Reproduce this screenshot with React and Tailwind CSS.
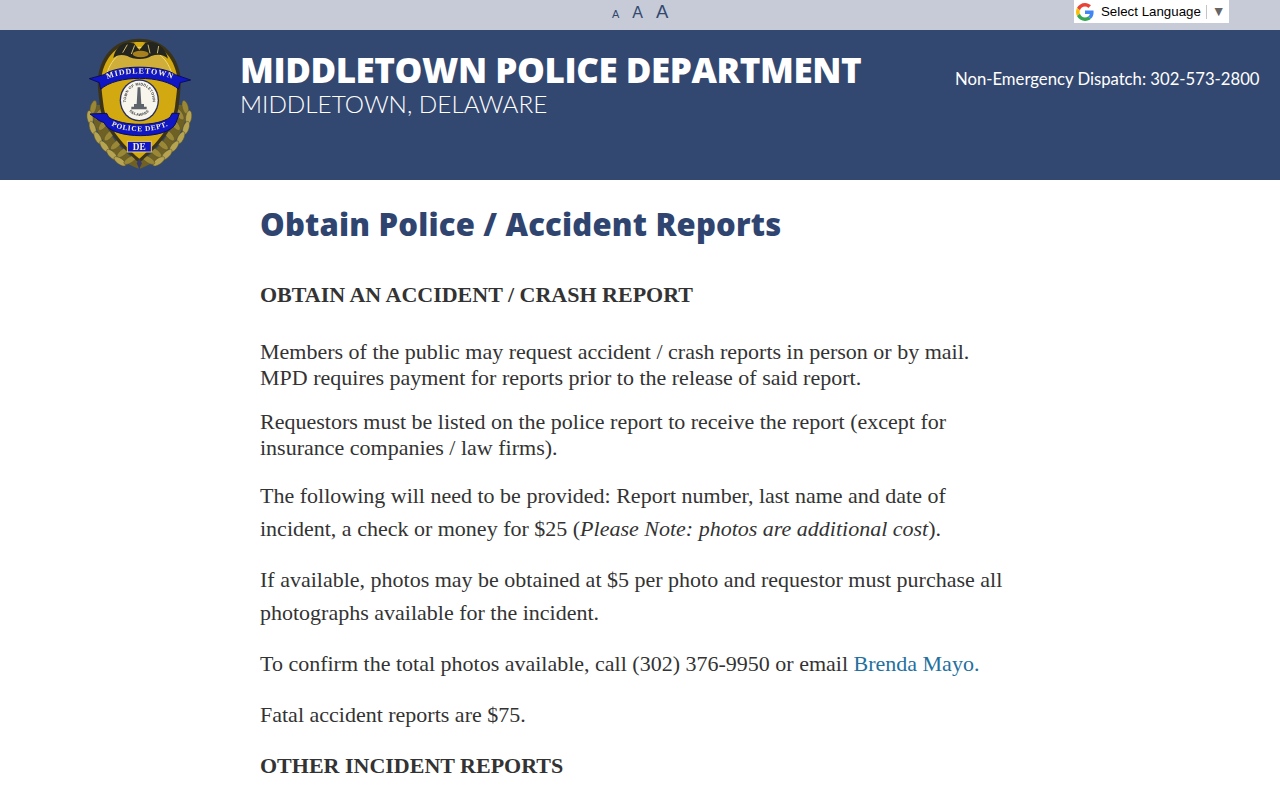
import React from 'react';

// leaf positions on the left laurel, mirrored for the right one
const LEAVES = [
  [70, 232, 15], [60, 262, -8], [88, 252, 35], [68, 294, -18], [100, 284, 38], [84, 324, -28],
  [118, 316, 42], [104, 350, -38], [138, 344, 48], [126, 374, -45], [158, 368, 52], [150, 394, -55], [180, 390, 58],
];

function Laurel() {
  return (
    <g>
      <path d="M62 225 C66 310 130 390 206 416 L206 396 C150 360 100 300 92 225 Z" fill="#6f6124" />
      {LEAVES.map(([x, y, r], i) => (
        <ellipse key={i} cx={x} cy={y} rx="9" ry="21" transform={`rotate(${r} ${x} ${y})`} fill={i % 2 ? '#b7a450' : '#9a8836'} stroke="#55502f" strokeWidth="1.5" />
      ))}
    </g>
  );
}

function Badge() {
  return (
    <svg width="140" height="150" viewBox="0 0 420 450" className="block blur-[0.3px]">
      <Laurel />
      <g transform="translate(416 0) scale(-1 1)">
        <Laurel />
      </g>
      {/* shield */}
      <path d="M208 26 C150 26 100 60 86 130 C80 160 86 190 90 230 C98 290 150 350 208 398 C266 350 318 290 326 230 C330 190 336 160 330 130 C316 60 266 26 208 26 Z" fill="#3b3318" />
      <path d="M208 36 C156 36 110 68 96 132 C91 165 97 195 101 230 C109 286 156 342 208 386 C260 342 307 286 315 230 C319 195 325 165 320 132 C306 68 260 36 208 36 Z" fill="#d2a911" />
      <path d="M208 52 C166 52 126 78 110 132 L306 132 C290 78 250 52 208 52 Z" fill="#cfae3a" stroke="#f0dc80" strokeWidth="3" />
      {/* eagle */}
      <path d="M130 84 C134 58 154 30 192 40 L208 60 L226 38 C260 28 288 56 294 86 C280 72 262 72 244 78 C228 90 190 90 172 78 C156 72 142 74 130 84 Z" fill="#25251f" />
      <path d="M158 68 L172 44 M184 72 L194 46 M240 70 L234 44 M262 70 L266 48" stroke="#cdbb6a" strokeWidth="3" />
      <ellipse cx="212" cy="72" rx="24" ry="10" fill="#a9811c" />
      {/* top ribbon */}
      <path d="M58 146 L102 134 C140 104 276 104 316 134 L362 150 L330 158 L326 178 C280 134 138 134 92 178 L88 158 Z" fill="#1016c4" stroke="#0b0e5e" strokeWidth="3" />
      <path id="topArc" d="M108 150 C150 124 268 124 312 150" fill="none" />
      <text fontFamily="Liberation Serif, serif" fontSize="24" fontWeight="700" fill="#f3eed0" letterSpacing="2.5">
        <textPath href="#topArc" startOffset="50%" textAnchor="middle">MIDDLETOWN</textPath>
      </text>
      {/* seal */}
      <ellipse cx="208" cy="211" rx="59" ry="63" fill="#2b2e5c" />
      <ellipse cx="208" cy="211" rx="55" ry="59" fill="#f7f5ec" />
      <path id="sealTop" d="M168 214 C168 150 248 150 248 214" fill="none" />
      <path id="sealLow" d="M170 232 C186 266 230 266 246 232" fill="none" />
      <text fontFamily="Liberation Sans, sans-serif" fontSize="11" fontWeight="700" fill="#33333a" letterSpacing="0.8">
        <textPath href="#sealTop" startOffset="50%" textAnchor="middle">TOWN OF MIDDLETOWN</textPath>
      </text>
      <text fontFamily="Liberation Sans, sans-serif" fontSize="11" fontWeight="700" fill="#33333a" letterSpacing="0.8">
        <textPath href="#sealLow" startOffset="50%" textAnchor="middle">DELAWARE</textPath>
      </text>
      <path d="M203 172 h8 l3 50 h8 v8 h8 v8 h-46 v-8 h8 v-8 h8 Z" fill="#5d626b" />
      {/* lower ribbon */}
      <path d="M60 252 L110 250 L116 262 C160 290 262 290 300 262 L306 250 L328 250 L318 278 C300 330 124 330 102 278 L88 272 Z" fill="#1016c4" stroke="#0b0e5e" strokeWidth="3" />
      <path id="lowArc" d="M120 284 C160 310 258 310 300 284" fill="none" />
      <text fontFamily="Liberation Serif, serif" fontSize="22" fontWeight="700" fill="#f3eed0" letterSpacing="2">
        <textPath href="#lowArc" startOffset="50%" textAnchor="middle">POLICE DEPT.</textPath>
      </text>
      {/* state tag */}
      <rect x="172" y="334" width="72" height="32" fill="#1016c4" stroke="#e2cb62" strokeWidth="3" />
      <text x="208" y="360" textAnchor="middle" fontFamily="Liberation Serif, serif" fontSize="28" fontWeight="700" fill="#f3eed0">DE</text>
      <path d="M208 386 l8 14 l-8 16 l-8 -16 Z" fill="#37396a" />
    </svg>
  );
}

function GoogleG() {
  return (
    <svg width="18" height="18" viewBox="0 0 48 48">
      <path fill="#EA4335" d="M24 9.5c3.5 0 6.6 1.2 9.1 3.6l6.8-6.8C35.8 2.5 30.4 0 24 0 14.6 0 6.5 5.4 2.6 13.2l7.9 6.2C12.4 13.6 17.7 9.5 24 9.5z" />
      <path fill="#4285F4" d="M46.9 24.5c0-1.6-.1-3.1-.4-4.5H24v9h12.9c-.6 3-2.2 5.500-4.800 7.200l7.700 6c4.500-4.200 7.100-10.300 7.100-17.700z" />
      <path fill="#FBBC05" d="M10.500 28.600c-.5-1.400-.8-3-.8-4.600s.3-3.200.8-4.600l-7.900-6.200C.9 16.500 0 20.100 0 24s.9 7.500 2.600 10.800l7.900-6.200z" />
      <path fill="#34A853" d="M24 48c6.500 0 11.900-2.100 15.800-5.800l-7.700-6c-2.100 1.400-4.900 2.300-8.100 2.300-6.300 0-11.600-4.100-13.500-9.900l-7.900 6.200C6.500 42.600 14.600 48 24 48z" />
    </svg>
  );
}

export default function App() {
  return (
    <div className="h-[800px] overflow-hidden bg-white font-['Liberation_Serif',serif] text-[#333333]">
      {/* top utility bar */}
      <div className="h-[30px] bg-[#c6cbd7] flex items-start font-['Liberation_Sans',sans-serif]">
        <div className="ml-[612px] w-[462px] h-[24px] flex items-baseline text-[#33486f]">
          <span className="text-[11px] leading-[26px]">A</span>
          <span className="ml-[13px] text-[16px] leading-[26px]">A</span>
          <span className="ml-[13px] text-[18.500px] leading-[24px]">A</span>
        </div>
        <div className="w-[155px] h-[23px] bg-white flex items-center pl-[2px] text-[13.300px] text-black">
          <GoogleG />
          <span className="ml-[7px]">Select Language</span>
          <span className="ml-[5px] h-[14px] border-l border-[#c4c4c4]" />
          <span className="ml-[5px] text-[#666666] text-[14px]">▼</span>
        </div>
      </div>

      {/* header */}
      <div className="h-[150px] bg-[#334870] flex items-start text-white">
        <div className="ml-[70px] w-[170px] shrink-0">
          <Badge />
        </div>
        <div className="mt-[19px] w-[715px] shrink-0">
          <div className="font-['Open_Sans',sans-serif] text-[35px] leading-[42px] font-extrabold tracking-[-0.44px] whitespace-nowrap">MIDDLETOWN POLICE DEPARTMENT</div>
          <div className="font-['Lato',sans-serif] text-[24.300px] leading-[26px] font-light whitespace-nowrap">MIDDLETOWN, DELAWARE</div>
        </div>
        <div className="mt-[38px] font-['Lato',sans-serif] text-[16.700px] leading-[22px] whitespace-nowrap">Non-Emergency Dispatch: 302-573-2800</div>
      </div>

      {/* content */}
      <div className="ml-[260px] w-[750px]">
        <h1 className="mt-[25px] text-[31px] leading-[38px] font-extrabold tracking-[0.2px] text-[#2f4570] font-['Open_Sans',sans-serif]">Obtain Police / Accident Reports</h1>
        <h2 className="mt-[39px] text-[22px] leading-[26px] font-bold">OBTAIN AN ACCIDENT / CRASH REPORT</h2>
        <p className="mt-[31px] text-[22px] leading-[26px]">
          Members of the public may request accident / crash reports in person or by mail.<br />
          MPD requires payment for reports prior to the release of said report.
        </p>
        <p className="mt-[18px] text-[22px] leading-[26px]">
          Requestors must be listed on the police report to receive the report (except for<br />
          insurance companies / law firms).
        </p>
        <p className="mt-[18px] text-[22px] leading-[33px]">
          The following will need to be provided: Report number, last name and date of<br />
          incident, a check or money for $25 (<em>Please Note: photos are additional cost</em>).
        </p>
        <p className="mt-[18px] text-[22px] leading-[33px]">
          If available, photos may be obtained at $5 per photo and requestor must purchase all<br />
          photographs available for the incident.
        </p>
        <p className="mt-[18px] text-[22px] leading-[33px]">
          To confirm the total photos available, call (302) 376-9950 or email <a href="#" className="text-[#23709e]">Brenda Mayo.</a>
        </p>
        <p className="mt-[18px] text-[22px] leading-[33px]">Fatal accident reports are $75.</p>
        <h2 className="mt-[18px] text-[22px] leading-[33px] font-bold">OTHER INCIDENT REPORTS</h2>
      </div>
    </div>
  );
}
